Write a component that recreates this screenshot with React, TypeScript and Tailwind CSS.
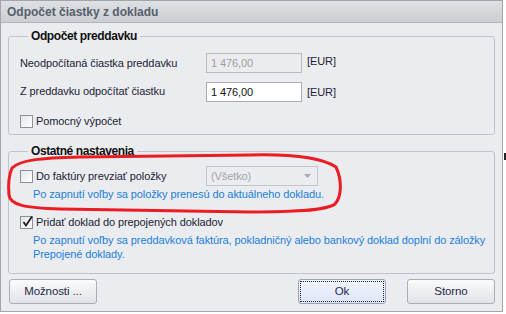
import React from "react";

const font = { fontFamily: "Tahoma, 'Liberation Sans', Arial, sans-serif" };

function Check({ checked }: { checked?: boolean }) {
  return (
    <span className="relative flex h-[13px] w-[13px] shrink-0 items-center justify-center border border-[#8e9197] bg-gradient-to-br from-[#e4e5e8] to-white">
      {checked && (
        <svg width="13" height="13" viewBox="0 0 13 13" className="absolute -top-[2px] left-[0px]">
          <path d="M2.5 7 L5 10.5 L11 1.5" fill="none" stroke="#1b1b1b" strokeWidth="1.8" />
        </svg>
      )}
    </span>
  );
}

function Btn({ label, focus }: { label: string; focus?: boolean }) {
  return (
    <button
      className={
        "flex h-[25px] w-[88px] items-center justify-center rounded-[3px] border text-[11.5px] text-[#1e2a4a] " +
        (focus
          ? "border-[#9aa3b8] bg-gradient-to-b from-[#f1f4fd] to-[#dde6f8]"
          : "border-[#acadb3] bg-gradient-to-b from-[#fbfbfc] to-[#e2e3e7]")
      }
    >
      <span
        className={
          "flex h-[21px] w-[84px] items-center justify-center " +
          (focus ? "border border-dotted border-[#222]" : "")
        }
      >
        {label}
      </span>
    </button>
  );
}

export default function App() {
  return (
    <div className="relative h-[314px] w-[506px] overflow-hidden bg-white" style={font}>
      <div className="flex h-[312px] w-[503px] flex-col border border-[#a3a5aa] bg-[#ebecef]">
        {/* Title bar */}
        <div className="flex h-[22px] items-center border-b border-[#b3b5ba] bg-gradient-to-b from-[#dfe0e3] to-[#cdced2] px-[6px] text-[12px] font-bold text-[#55606c]">
          Odpočet čiastky z dokladu
        </div>

        <div className="flex flex-1 flex-col px-[7px] pt-[4px] text-[11px] tracking-[-0.1px]">
          {/* Group 1 */}
          <fieldset className="h-[108px] rounded-[3px] border border-[#c2c4c9] pl-[11px] pr-[8px]">
            <legend className="ml-[8px] px-[3px] text-[12px] font-bold tracking-[-0.4px] text-[#111]">Odpočet preddavku</legend>
            <div className="mt-[8px] flex h-[20px] items-center text-[#1c2436]">
              <span className="w-[186px]">Neodpočítaná čiastka preddavku</span>
              <div className="flex h-[20px] w-[96px] items-center border border-[#b9bbc0] bg-[#ececee] px-[4px] text-[#9c9ea3]">
                1 476,00
              </div>
              <span className="ml-[5px] -mt-[4px]">[EUR]</span>
            </div>
            <div className="mt-[9px] flex h-[20px] items-center text-[#1c2436]">
              <span className="-mt-[2px] w-[186px]">Z preddavku odpočítať čiastku</span>
              <div className="flex h-[20px] w-[96px] items-center border border-[#abadb3] bg-white px-[4px] text-[#111]">
                1 476,00
              </div>
              <span className="ml-[5px]">[EUR]</span>
            </div>
            <div className="mt-[11px] flex items-center gap-[3px] text-[#1c2436]">
              <Check />
              <span>Pomocný výpočet</span>
            </div>
          </fieldset>

          {/* Group 2 */}
          <fieldset className="mt-[7px] h-[132px] rounded-[3px] border border-[#c2c4c9] pl-[11px] pr-[8px]">
            <legend className="ml-[8px] px-[3px] text-[12px] font-bold tracking-[-0.4px] text-[#111]">Ostatné nastavenia</legend>
            <div className="mt-[6px] flex h-[20px] items-center text-[#1c2436]">
              <div className="flex w-[186px] items-center gap-[3px]">
                <Check />
                <span>Do faktúry prevziať položky</span>
              </div>
              <div className="flex h-[20px] w-[112px] items-center justify-between border border-[#c4c6cb] bg-[#ebecef] pl-[4px] pr-[6px] text-[#a2a4a9]">
                <span>(Všetko)</span>
                <svg width="7" height="4" viewBox="0 0 7 4">
                  <path d="M0 0 L7 0 L3.5 4 Z" fill="#a9abb0" />
                </svg>
              </div>
            </div>
            <div className="ml-[13px] mt-[1px] whitespace-nowrap leading-[14px] text-[#1a7fdc]">
              Po zapnutí voľby sa položky prenesú do aktuálneho dokladu.
            </div>
            <div className="mt-[13px] flex items-center gap-[3px] text-[#1c2436]">
              <Check checked />
              <span>Pridať doklad do prepojených dokladov</span>
            </div>
            <div className="ml-[13px] mt-[2px] whitespace-nowrap leading-[14px] text-[#1a7fdc]">
              Po zapnutí voľby sa preddavková faktúra, pokladničný alebo bankový doklad doplní do záložky
              <br />
              Prepojené doklady.
            </div>
          </fieldset>

          {/* Buttons */}
          <div className="mt-[5px] flex items-center pl-[1px]">
            <Btn label="Možnosti ..." />
            <div className="flex-1" />
            <Btn label="Ok" focus />
            <div className="w-[21px]" />
            <Btn label="Storno" />
          </div>
        </div>
      </div>

      {/* Red annotation ellipse */}
      <svg className="pointer-events-none absolute left-0 top-0" width="506" height="314">
        <path
          d="M12 168 C20 160, 40 158, 80 157 L250 155 C290 154, 322 158, 336 167 C342 180, 342 196, 335 204 C326 211, 290 212, 250 212 L60 209 C25 208, 10 205, 9 195 C8 185, 9 175, 12 168 Z"
          fill="none"
          stroke="#ec1c24"
          strokeWidth="3"
        />
      </svg>
      <div className="absolute left-[504px] top-[153px] h-[7px] w-[2px] bg-[#222]" />
    </div>
  );
}
